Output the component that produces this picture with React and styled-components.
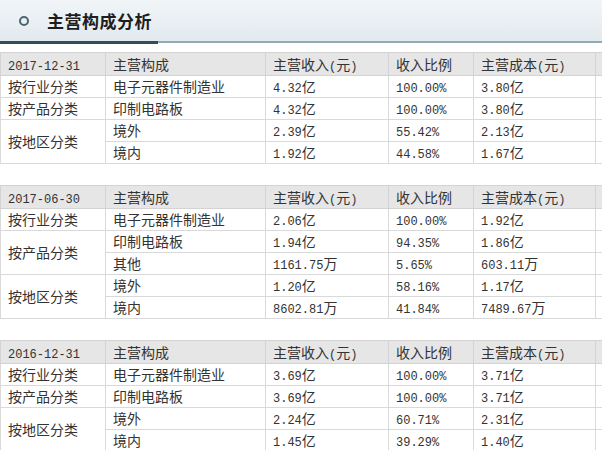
import React from 'react';
import styled, { createGlobalStyle } from 'styled-components';

const GlobalStyle = createGlobalStyle`
  html, body {
    margin: 0;
    padding: 0;
    overflow: hidden;
    background: #fff;
  }
  body {
    font-family: "Noto Sans CJK SC", sans-serif;
    color: #333;
  }
`;

const reports = [
  {
    date: '2017-12-31',
    groups: [
      { name: '按行业分类', rows: [['电子元器件制造业', '4.32亿', '100.00%', '3.80亿']] },
      { name: '按产品分类', rows: [['印制电路板', '4.32亿', '100.00%', '3.80亿']] },
      {
        name: '按地区分类',
        rows: [
          ['境外', '2.39亿', '55.42%', '2.13亿'],
          ['境内', '1.92亿', '44.58%', '1.67亿'],
        ],
      },
    ],
  },
  {
    date: '2017-06-30',
    groups: [
      { name: '按行业分类', rows: [['电子元器件制造业', '2.06亿', '100.00%', '1.92亿']] },
      {
        name: '按产品分类',
        rows: [
          ['印制电路板', '1.94亿', '94.35%', '1.86亿'],
          ['其他', '1161.75万', '5.65%', '603.11万'],
        ],
      },
      {
        name: '按地区分类',
        rows: [
          ['境外', '1.20亿', '58.16%', '1.17亿'],
          ['境内', '8602.81万', '41.84%', '7489.67万'],
        ],
      },
    ],
  },
  {
    date: '2016-12-31',
    groups: [
      { name: '按行业分类', rows: [['电子元器件制造业', '3.69亿', '100.00%', '3.71亿']] },
      { name: '按产品分类', rows: [['印制电路板', '3.69亿', '100.00%', '3.71亿']] },
      {
        name: '按地区分类',
        rows: [
          ['境外', '2.24亿', '60.71%', '2.31亿'],
          ['境内', '1.45亿', '39.29%', '1.40亿'],
        ],
      },
    ],
  },
];

// half-width runs (digits, dots, %) get the narrow mono face, like SimSun
const Mixed = ({ text }) =>
  text.split(/([\x20-\x7e]+)/).filter(Boolean).map((part, i) =>
    /^[\x20-\x7e]+$/.test(part) ? <Num key={i}>{part}</Num> : <span key={i}>{part}</span>
  );

const App = () => {
  return (
    <React.Fragment>
      <GlobalStyle />
      <Page>
        <TitleBar>
          <Ring />
          <Title>主营构成分析</Title>
          <Underline />
        </TitleBar>
        {reports.map((r) => (
          <Table key={r.date}>
            <colgroup>
              <col style={{ width: 105 }} />
              <col style={{ width: 160 }} />
              <col style={{ width: 123 }} />
              <col style={{ width: 85 }} />
              <col style={{ width: 122 }} />
              <col style={{ width: 90 }} />
            </colgroup>
            <tbody>
              <HeadRow>
                <Th><Mixed text={r.date} /></Th>
                <Th>主营构成</Th>
                <Th><Mixed text="主营收入(元)" /></Th>
                <Th>收入比例</Th>
                <Th><Mixed text="主营成本(元)" /></Th>
                <Th />
              </HeadRow>
              {r.groups.map((g) =>
                g.rows.map((row, i) => (
                  <tr key={g.name + i}>
                    {i === 0 && <Td rowSpan={g.rows.length}>{g.name}</Td>}
                    {row.map((v, j) => (
                      <Td key={j}><Mixed text={v} /></Td>
                    ))}
                    <Td />
                  </tr>
                ))
              )}
            </tbody>
          </Table>
        ))}
      </Page>
    </React.Fragment>
  );
};
export default App;

const Page = styled.div`
  width: 700px;
`;

const TitleBar = styled.div`
  position: relative;
  height: 41px;
  display: flex;
  align-items: center;
  padding-left: 19px;
  margin-right: 98px;
  background: linear-gradient(180deg, #f1f5f8 0%, #e2eaef 100%);
  border-bottom: 2px solid #93aab2;
  margin-bottom: 9px;
`;

const Ring = styled.span`
  width: 6px;
  height: 6px;
  border: 2px solid #4b6572;
  border-radius: 50%;
  margin-top: 1px;
`;

const Title = styled.h2`
  margin: 0 0 0 18px;
  font-size: 17px;
  line-height: 20px;
  font-weight: 700;
  color: #1e1e1e;
  letter-spacing: 0.5px;
`;

const Underline = styled.span`
  position: absolute;
  left: 0;
  bottom: -3px;
  width: 158px;
  height: 3px;
  background: #2f4f5a;
`;

const Table = styled.table`
  border-collapse: collapse;
  table-layout: fixed;
  width: 685px;
  margin-bottom: 21px;
  font-size: 14px;
  line-height: 19px;
  color: #333;
`;

const HeadRow = styled.tr`
  background: #e6e6e6;
`;

const Th = styled.td`
  height: 22px;
  padding: 0 7px;
  border: 1px solid #d3d3d3;
  white-space: nowrap;
  overflow: hidden;
`;

const Td = styled.td`
  height: 21px;
  padding: 0 7px;
  border: 1px solid #d9d9d9;
  white-space: nowrap;
  overflow: hidden;
`;

const Num = styled.span`
  font-family: "Liberation Mono", monospace;
  font-size: 12px;
  line-height: 1;
`;
